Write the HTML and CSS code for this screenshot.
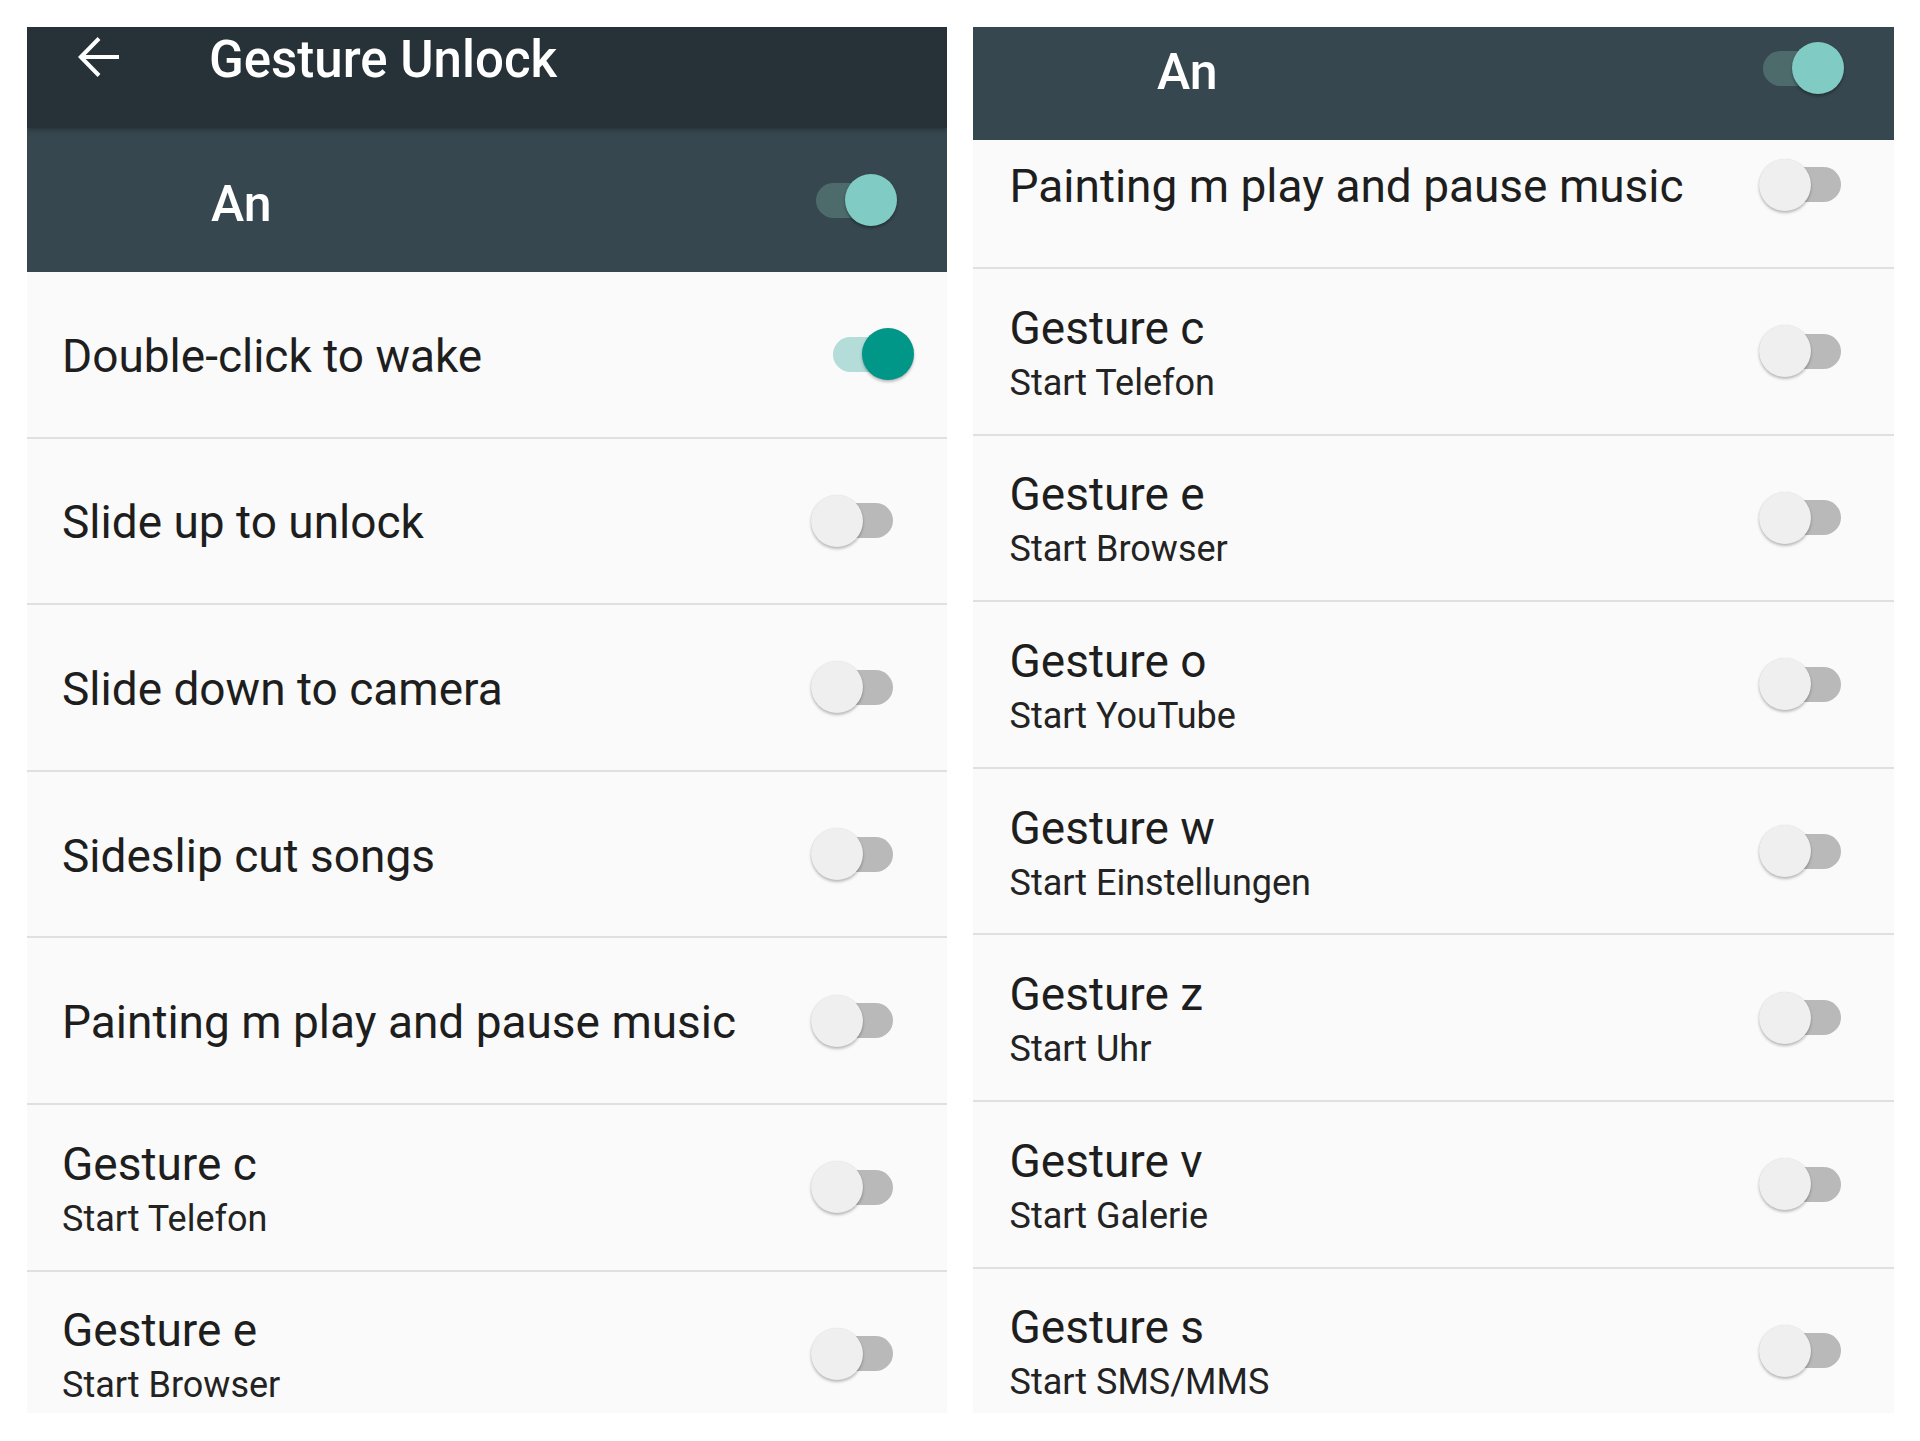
FILE: index.html
```html
<!DOCTYPE html>
<html lang="de">
<head>
<meta charset="utf-8">
<title>Gesture Unlock</title>
<link rel="stylesheet" href="styles.css">
</head>
<body>
<div class="page">
  <section class="panel">
    <header class="toolbar">
      <div class="toolbar-row">
        <svg class="back" width="41" height="40" viewBox="0 0 41 40" aria-hidden="true">
          <path d="M41 20H3M21 1.5L2.8 20L21 38.5" fill="none" stroke="#fff" stroke-width="4"/>
        </svg>
        <h1 class="title">Gesture Unlock</h1>
      </div>
    </header>
    <div class="master">
      <span class="master-label">An</span>
      <div class="switch switch-master on"><span class="track"></span><span class="thumb"></span></div>
    </div>
    <div class="list">
      <div class="row"><div class="label"><div class="row-title">Double-click to wake</div></div><div class="switch on"><span class="track"></span><span class="thumb"></span></div></div>
      <div class="row"><div class="label"><div class="row-title">Slide up to unlock</div></div><div class="switch"><span class="track"></span><span class="thumb"></span></div></div>
      <div class="row"><div class="label"><div class="row-title">Slide down to camera</div></div><div class="switch"><span class="track"></span><span class="thumb"></span></div></div>
      <div class="row"><div class="label"><div class="row-title">Sideslip cut songs</div></div><div class="switch"><span class="track"></span><span class="thumb"></span></div></div>
      <div class="row"><div class="label"><div class="row-title">Painting m play and pause music</div></div><div class="switch"><span class="track"></span><span class="thumb"></span></div></div>
      <div class="row"><div class="label"><div class="row-title">Gesture c</div><div class="row-sub">Start Telefon</div></div><div class="switch"><span class="track"></span><span class="thumb"></span></div></div>
      <div class="row"><div class="label"><div class="row-title">Gesture e</div><div class="row-sub">Start Browser</div></div><div class="switch"><span class="track"></span><span class="thumb"></span></div></div>
    </div>
  </section>

  <section class="panel panel-right">
    <div class="master-clip">
      <div class="master master-scrolled">
        <span class="master-label">An</span>
        <div class="switch switch-master on"><span class="track"></span><span class="thumb"></span></div>
      </div>
    </div>
    <div class="list-clip">
      <div class="list list-scrolled">
        <div class="row"><div class="label"><div class="row-title">Painting m play and pause music</div></div><div class="switch"><span class="track"></span><span class="thumb"></span></div></div>
        <div class="row"><div class="label"><div class="row-title">Gesture c</div><div class="row-sub">Start Telefon</div></div><div class="switch"><span class="track"></span><span class="thumb"></span></div></div>
        <div class="row"><div class="label"><div class="row-title">Gesture e</div><div class="row-sub">Start Browser</div></div><div class="switch"><span class="track"></span><span class="thumb"></span></div></div>
        <div class="row"><div class="label"><div class="row-title">Gesture o</div><div class="row-sub">Start YouTube</div></div><div class="switch"><span class="track"></span><span class="thumb"></span></div></div>
        <div class="row"><div class="label"><div class="row-title">Gesture w</div><div class="row-sub">Start Einstellungen</div></div><div class="switch"><span class="track"></span><span class="thumb"></span></div></div>
        <div class="row"><div class="label"><div class="row-title">Gesture z</div><div class="row-sub">Start Uhr</div></div><div class="switch"><span class="track"></span><span class="thumb"></span></div></div>
        <div class="row"><div class="label"><div class="row-title">Gesture v</div><div class="row-sub">Start Galerie</div></div><div class="switch"><span class="track"></span><span class="thumb"></span></div></div>
        <div class="row"><div class="label"><div class="row-title">Gesture s</div><div class="row-sub">Start SMS/MMS</div></div><div class="switch"><span class="track"></span><span class="thumb"></span></div></div>
      </div>
    </div>
  </section>
</div>
</body>
</html>
```

FILE: styles.css
```css
* { box-sizing: border-box; }

html, body {
  margin: 0;
  padding: 0;
  background: #ffffff;
}

body {
  font-family: Roboto, "Noto Sans", "Liberation Sans", sans-serif;
  color: #212121;
  width: 1920px;
  height: 1441px;
  overflow: hidden;
}

.page {
  display: flex;
  gap: 26px;
  padding: 27px 26px 0 27px;
}

.panel {
  width: 920px;
  height: 1386px;
  overflow: hidden;
  background: #fafafa;
  display: flex;
  flex-direction: column;
}

.panel-right {
  width: 921px;
}

/* Toolbar */
.toolbar {
  position: relative;
  z-index: 2;
  flex: 0 0 101px;
  height: 101px;
  background: #263238;
  padding: 10px 0 0 51px;
  box-shadow: 0 2px 5px rgba(0, 0, 0, 0.28);
}

.toolbar-row {
  height: 40px;
  display: flex;
  align-items: center;
}

.back {
  flex: 0 0 41px;
  display: block;
}

.title {
  margin: 0 0 0 90px;
  padding-top: 5px;
  font-size: 51px;
  font-weight: 500;
  line-height: 60px;
  color: #ffffff;
  white-space: nowrap;
}

/* Master switch bar */
.master {
  flex: 0 0 144px;
  height: 144px;
  background: #37474f;
  display: flex;
  align-items: center;
  justify-content: space-between;
  padding: 0 50px 0 184px;
}

.master-label {
  font-size: 50px;
  font-weight: 500;
  line-height: 58px;
  color: #ffffff;
  padding-top: 8px;
}

.master-clip {
  flex: 0 0 113px;
  height: 113px;
  overflow: hidden;
  background: #37474f;
}

.master-scrolled {
  margin-top: -31px;
}

/* List */
.list {
  display: flex;
  flex-direction: column;
}

.list-clip {
  overflow: hidden;
  flex: 1 1 auto;
}

.list-scrolled {
  margin-top: -37.6px;
}

.row {
  flex: 0 0 166.6px;
  height: 166.6px;
  display: flex;
  align-items: center;
  justify-content: space-between;
  padding: 0 33px 0 35px;
  border-bottom: 2px solid #e0e0e0;
  background: #fafafa;
}

.panel-right .row {
  padding-left: 36.5px;
  padding-right: 32px;
}

.label {
  padding-top: 3px;
  display: flex;
  flex-direction: column;
}

.row-title {
  font-size: 46px;
  line-height: 54px;
  color: #1e1e1e;
  white-space: nowrap;
}

.row-sub {
  margin-top: 6px;
  font-size: 36px;
  line-height: 44px;
  color: #232323;
  white-space: nowrap;
}

/* Switches */
.switch {
  position: relative;
  flex: 0 0 103px;
  width: 103px;
  height: 52px;
}

.switch .track {
  position: absolute;
  left: 22px;
  top: 8.5px;
  width: 60px;
  height: 35px;
  border-radius: 17.5px;
  background: #b9b9b9;
}

.switch .thumb {
  position: absolute;
  left: 0;
  top: 0;
  width: 52px;
  height: 52px;
  border-radius: 50%;
  background: #efefef;
  box-shadow: 0 2px 3px rgba(0, 0, 0, 0.26), 0 0 1px rgba(0, 0, 0, 0.12);
}

.switch.on .thumb {
  left: 51px;
  background: #009688;
}

.switch.on .track {
  background: #b4dcd8;
}

.switch-master.on .track {
  background: #4e6b6c;
}

.switch-master.on .thumb {
  background: #80cbc4;
  box-shadow: 0 2px 3px rgba(0, 0, 0, 0.35);
}
```
